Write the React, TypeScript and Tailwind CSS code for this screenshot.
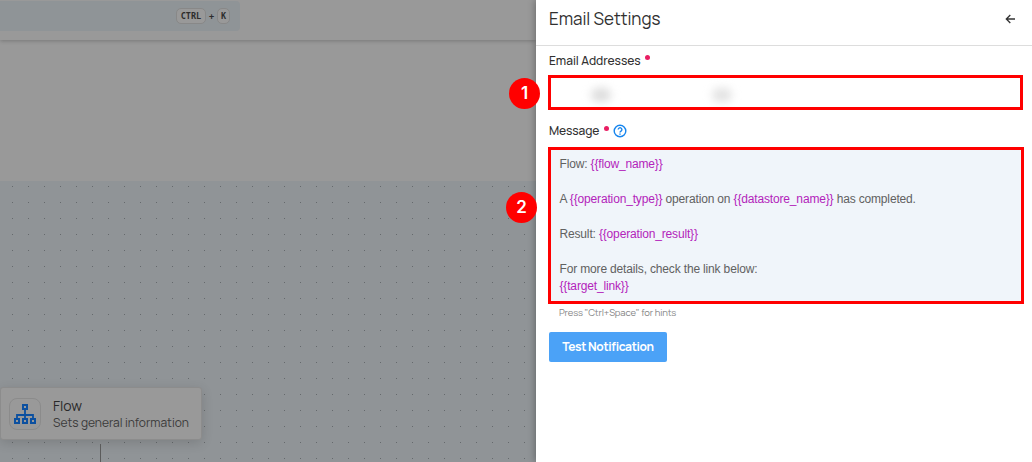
import React from "react";

const UI = "font-['Manrope','Inter',sans-serif]";

function Variable({ name }: { name: string }) {
  return <span className="text-[#b324bb]">{"{{" + name + "}}"}</span>;
}

function Callout({ n, className }: { n: number; className: string }) {
  return (
    <div
      className={
        "absolute flex h-[31px] w-[31px] items-center justify-center rounded-full bg-[#ff0000] font-['Inter',sans-serif] text-[17px] font-semibold leading-none text-white " +
        className
      }
    >
      {n}
    </div>
  );
}

function Required() {
  return <span className="block h-[5px] w-[5px] rounded-full bg-[#e91e63]" />;
}

function FlowIcon() {
  return (
    <svg width="24" height="22" viewBox="0 0 24 22" fill="none" stroke="#0c50a0" strokeWidth="2">
      <rect x="10" y="2" width="4" height="4" />
      <rect x="2" y="16" width="4" height="4" />
      <rect x="10" y="16" width="4" height="4" />
      <rect x="18" y="16" width="4" height="4" />
      <path d="M12 6v10M4 16v-4h16v4" strokeWidth="1.8" />
    </svg>
  );
}

function Workspace() {
  return (
    <main className="relative flex h-[462px] w-[536px] shrink-0 flex-col overflow-hidden bg-[#999999]">
      <header className="relative z-10 flex h-10 shrink-0 items-start bg-[#999999] pt-px shadow-[0_1px_4px_rgba(0,0,0,0.22)]">
        <div className="flex h-[30px] w-60 items-center justify-end gap-[3px] rounded-r-[4px] bg-[#8f9497] pr-[10px] font-['DejaVu_Sans_Mono',monospace] text-[8.5px] font-bold text-[#2c2c2c]">
          <kbd className="flex h-4 w-[30px] items-center justify-center rounded-[5px] border border-[#888888] bg-[#999999] font-[inherit]">
            CTRL
          </kbd>
          <span className="w-[5px] text-center">+</span>
          <kbd className="flex h-4 w-[13px] items-center justify-center rounded-[5px] border border-[#888888] bg-[#999999] font-[inherit]">
            K
          </kbd>
        </div>
      </header>
      <div className="h-[141px] shrink-0" />
      <section className="flex flex-1 flex-col bg-[#909497] bg-[radial-gradient(circle_at_4.5px_5.5px,#65696c_0.6px,transparent_1px)] bg-[length:16px_16px] bg-[position:8px_0px] pt-[206px]">
        <div className="flex h-[53px] w-[202px] shrink-0 items-center rounded-[3px] border border-[#8c8c8c] bg-[#999999] pl-2 shadow-[0_3px_12px_rgba(0,0,0,0.14)]">
          <div className="flex h-8 w-8 shrink-0 items-center justify-center rounded-[8px] border border-[#8b8b8b]">
            <FlowIcon />
          </div>
          <div className={"ml-3 flex flex-col whitespace-nowrap " + UI}>
            <span className="text-[14px] leading-[17px] text-[#292929]">Flow</span>
            <span className="pt-px text-[12px] leading-4 text-[#3b3b3b]">Sets general information</span>
          </div>
        </div>
        <div className="ml-[100px] mt-[4px] h-5 w-px bg-[#5b5b5b]" />
      </section>
    </main>
  );
}

function SettingsPanel() {
  return (
    <aside className={"relative z-20 flex h-[462px] flex-1 flex-col bg-white text-[#303030] shadow-[-1px_0_7px_rgba(0,0,0,0.3)] " + UI}>
      <header className="flex h-[46px] shrink-0 items-center justify-between border-b border-[#dddddd] pb-2 pl-[13px] pr-[17px]">
        <h1 className="whitespace-nowrap text-[17px] leading-6 tracking-[-0.05px]">Email Settings</h1>
        <svg width="11" height="12" viewBox="0 0 11 12" fill="none" stroke="#333333" strokeWidth="1.3">
          <path d="M10 6H1.3M5.3 2 1.3 6l4 4" />
        </svg>
      </header>
      <div className="flex flex-col pl-3 pr-[9px]">
        <div className="flex h-[29px] items-start gap-[5px] pl-px pt-[7px] text-[12px] font-medium leading-4">
          <label className="w-[91px] whitespace-nowrap tracking-[-0.04px]">Email Addresses</label>
          <span className="pt-[2px]"><Required /></span>
        </div>
        <div className="flex h-[35px] w-[475px] items-center overflow-hidden border-[3px] border-[#ff0000] bg-white pt-1">
          <span className="ml-10 h-[14px] w-5 rounded-full bg-[#dddddd] blur-[4px]" />
          <span className="ml-[101px] h-[14px] w-5 rounded-full bg-[#e3e3e3] blur-[4px]" />
        </div>
        <div className="flex h-[37px] items-start pl-px pt-[13px] text-[12px] font-medium leading-4">
          <label className="w-[55px] whitespace-nowrap tracking-[-0.1px]">Message</label>
          <span className="pt-[3px]"><Required /></span>
          <svg className="ml-1 mt-px" width="14" height="14" viewBox="0 0 14 14" fill="none" stroke="#1685ee" strokeWidth="1.4">
            <circle cx="7" cy="7" r="5.8" />
            <path d="M5.2 5.6a1.85 1.85 0 1 1 2.8 1.6C7.3 7.6 7 7.8 7 8.6" />
            <path d="M7 9.6v1.2" />
          </svg>
        </div>
        <div className="h-[157px] w-[476px] whitespace-pre border-[3px] border-[#ff0000] bg-[#f0f5fa] pl-[8.5px] pt-[6px] font-['Liberation_Sans',Arial,sans-serif] text-[12px] leading-[17.5px] tracking-[-0.16px] text-[#616161]">
          <p>Flow: <Variable name="flow_name" /></p>
          <p className="mt-[17.5px]">A <Variable name="operation_type" /> operation on <Variable name="datastore_name" /> has completed.</p>
          <p className="mt-[17.5px]">Result: <Variable name="operation_result" /></p>
          <p className="mt-[17.5px]">For more details, check the link below:</p>
          <p className="-mt-[0.5px]"><Variable name="target_link" /></p>
        </div>
        <p className="ml-[11px] mt-[3px] whitespace-nowrap text-[9.5px] leading-3 tracking-[-0.15px] text-[#858585]">Press "Ctrl+Space" for hints</p>
        <button className="ml-px mt-[13px] h-[30px] w-[118px] whitespace-nowrap rounded-[2px] bg-[#4ba2f7] text-[12px] font-bold tracking-[-0.35px] text-white">
          Test Notification
        </button>
      </div>
    </aside>
  );
}

export default function App() {
  return (
    <div className="relative flex h-[462px] w-[1032px] overflow-hidden">
      <Workspace />
      <SettingsPanel />
      <Callout n={1} className="left-[509px] top-[78px] z-30" />
      <Callout n={2} className="left-[506px] top-[192px] z-30" />
    </div>
  );
}
